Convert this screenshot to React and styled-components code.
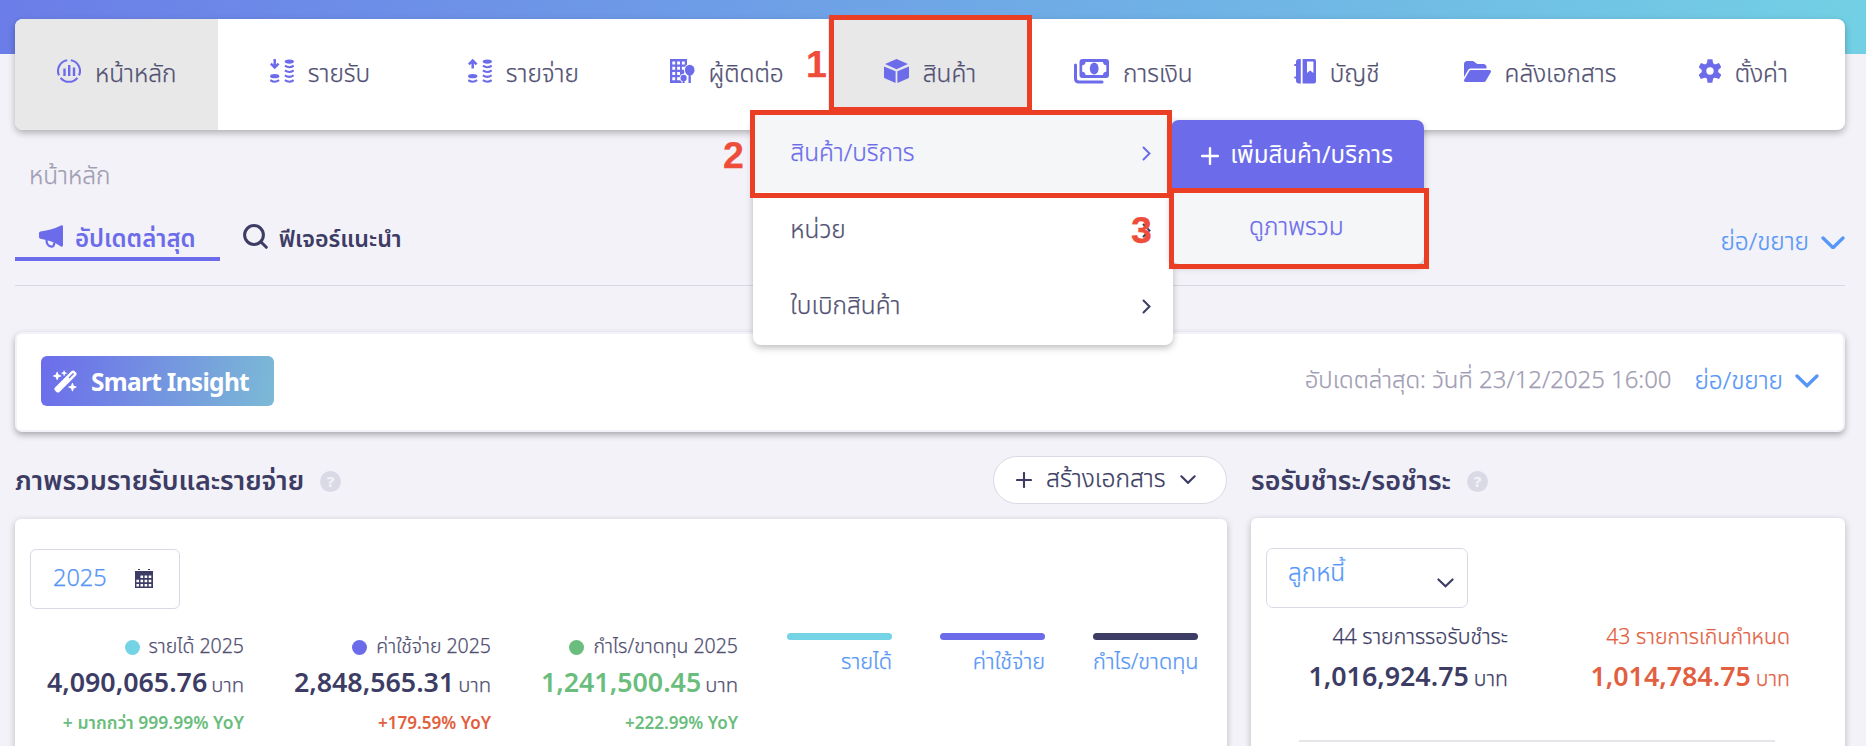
import React from 'react'
import styled, { createGlobalStyle } from 'styled-components'
import { FaFolderOpen, FaWandMagicSparkles } from 'react-icons/fa6'

const GlobalStyle = createGlobalStyle`
  * {
    box-sizing: border-box;
  }
  body {
    margin: 0;
    background: #f3f2f8;
    color: #515072;
    font-family: 'Noto Sans Thai', 'Noto Sans', sans-serif;
    font-weight: 300;
    font-size: 24.4px;
    -webkit-text-stroke: 0.25px;
  }
  svg {
    display: block;
    flex: none;
  }
`

const Page = styled.div`
  position: relative;
  height: 746px;
  overflow: hidden;
  padding: 19px 21px 0 15px;
  background: linear-gradient(90deg, #6b7de8, #72d0e4) top / 100% 54px no-repeat #f3f2f8;
  white-space: nowrap;
`

/* ---------- navbar ---------- */

const Navbar = styled.nav`
  display: grid;
  grid-template-columns: repeat(9, 1fr);
  height: 111px;
  background: #fff;
  border-radius: 8px;
  box-shadow: 0 3px 7px rgba(0, 0, 0, 0.28);
`
const NavItem = styled.div`
  position: relative;
  display: flex;
  align-items: center;
  justify-content: center;
  gap: 14px;
  background: ${p => (p.$active ? '#e8e8e8' : 'transparent')};
  border-radius: ${p => (p.$first ? '8px 0 0 8px' : '0')};
  color: #515072;
  & > svg {
    margin-bottom: 7px;
    color: #6c6ceb;
  }
`

/* ---------- dropdown ---------- */

const Menu = styled.div`
  position: absolute;
  z-index: 2;
  top: 96px;
  left: -75px;
  width: 420px;
  background: #fff;
  border-radius: 8px;
  box-shadow: 0 3px 7px rgba(0, 0, 0, 0.25);
`
const MenuRow = styled.div`
  display: flex;
  align-items: center;
  justify-content: space-between;
  height: 76.5px;
  padding: 0 22px 0 37px;
  color: ${p => (p.$active ? '#6c6ceb' : '#515072')};
  background: ${p => (p.$active ? '#f5f6f8' : 'transparent')};
  &:nth-child(2) {
    padding-top: 1px;
  }
  & > svg {
    color: ${p => (p.$active ? '#6c6ceb' : '#3c3c64')};
  }
`
const SubMenu = styled.div`
  position: absolute;
  z-index: 3;
  top: 5px;
  left: 418px;
  width: 253px;
  border-radius: 8px;
  overflow: hidden;
  background: #f5f6f8;
  box-shadow: 0 3px 7px rgba(0, 0, 0, 0.25);
`
const AddButton = styled.div`
  display: flex;
  align-items: center;
  gap: 11px;
  height: 71px;
  padding-left: 30px;
  background: #6c6ceb;
  color: #fff;
  font-weight: 400;
  font-size: 24.1px;
  -webkit-text-stroke: 0;
`
const SubRow = styled.div`
  height: 73px;
  padding-right: 3px;
  line-height: 73px;
  text-align: center;
  color: #6c6ceb;
`

/* ---------- breadcrumb and tabs ---------- */

const Breadcrumb = styled.div`
  height: 92px;
  padding: 29px 14px 0;
  line-height: 36px;
  color: #9f9db3;
`
const Tabs = styled.div`
  display: flex;
  height: 64px;
  border-bottom: 1px solid #d9d9e3;
`
const Tab = styled.div`
  display: flex;
  align-items: center;
  gap: 11px;
  height: 39px;
  padding: 0 24px;
  border-bottom: 4px solid ${p => (p.$active ? '#6c6ceb' : 'transparent')};
  color: ${p => (p.$active ? '#6c6ceb' : '#3c3c64')};
  font-size: ${p => (p.$active ? '24px' : '23.2px')};
  font-weight: 600;
  -webkit-text-stroke: 0;
  & + & {
    padding-left: 23px;
  }
  & > svg {
    margin-bottom: 6px;
  }
`
const Toggle = styled.div`
  display: flex;
  align-items: center;
  gap: 12px;
  height: ${p => p.$h || 39}px;
  color: #5596f7;
`
const Spacer = styled.div`
  flex: 1;
`

/* ---------- smart insight ---------- */

const InsightCard = styled.div`
  display: flex;
  align-items: center;
  gap: 24px;
  height: 100px;
  margin-top: 46px;
  padding: 0 24px 2px;
  background: #fff;
  border: 2px solid #f3f2f8;
  border-radius: 7px;
  box-shadow: 0 3px 6px rgba(0, 0, 0, 0.3);
`
const InsightBadge = styled.div`
  display: flex;
  align-items: center;
  gap: 13px;
  width: 233px;
  height: 50px;
  padding-left: 12px;
  border-radius: 6px;
  background: linear-gradient(100deg, #6c6ceb, #7bbad6);
  color: #fff;
  font-family: 'Noto Sans', sans-serif;
  font-size: 24.5px;
  font-weight: 700;
  letter-spacing: -0.7px;
  -webkit-text-stroke: 0;
`
const Updated = styled.div`
  margin-right: -1px;
  color: #9f9db3;
  font-size: 23.9px;
`

/* ---------- dashboard panels ---------- */

const Panels = styled.div`
  display: grid;
  grid-template-columns: 1212px 594px;
  gap: 24px;
`
const PanelHead = styled.div`
  display: flex;
  align-items: center;
  height: ${p => p.$h}px;
  padding-top: 12px;
`
const PanelTitle = styled.h2`
  margin: 0 16px 0 0;
  color: #3c3c64;
  font-size: 26.9px;
  font-weight: 600;
  -webkit-text-stroke: 0;
`
const Help = styled.div`
  width: 21px;
  height: 21px;
  border-radius: 50%;
  background: #dadae6;
  color: #f3f2f8;
  font: 700 15px/21px 'Noto Sans', sans-serif;
  text-align: center;
`
const CreateButton = styled.div`
  display: flex;
  align-items: center;
  gap: 14px;
  width: 234px;
  height: 48px;
  margin: 0 0 3px auto;
  padding: 0 0 1px 22px;
  border: 1px solid #d9d9e6;
  border-radius: 24px;
  background: #fff;
  color: #3c3c64;
  font-size: 24.6px;
`
const Card = styled.div`
  height: 260px;
  padding: 30px 15px;
  background: #fff;
  border-radius: 6px;
  box-shadow: 0 2px 7px rgba(0, 0, 0, 0.24);
`
const YearPicker = styled.div`
  display: flex;
  align-items: center;
  justify-content: space-between;
  width: 150px;
  height: 60px;
  padding: 0 26px 0 22px;
  border: 1px solid #d9d9e6;
  border-radius: 6px;
  color: #5596f7;
  font-size: 23.5px;
`
const Select = styled.div`
  display: flex;
  justify-content: space-between;
  width: 202px;
  height: 60px;
  padding: 10px 13px 0 21px;
  border: 1px solid #d9d9e6;
  border-radius: 7px;
  color: #5596f7;
  line-height: 30px;
  & > svg {
    margin-top: 19px;
    color: #3c3c64;
  }
`
const Summary = styled.div`
  display: flex;
  padding-top: ${p => p.$top}px;
`
const Metric = styled.div`
  width: ${p => p.$w}px;
  display: flex;
  flex-direction: column;
  align-items: flex-end;
  color: ${p => p.$color || '#515072'};
`
const MetricLabel = styled.div`
  display: flex;
  align-items: center;
  gap: 9px;
  font-size: ${p => (p.$big ? 21.3 : 19.5)}px;
  line-height: ${p => (p.$big ? 40 : 34)}px;
`
const Dot = styled.i`
  width: 15px;
  height: 15px;
  border-radius: 50%;
  background: ${p => p.$color};
`
const Amount = styled.div`
  display: flex;
  align-items: baseline;
  gap: ${p => (p.$big ? 5 : 4)}px;
  line-height: 40px;
  font-size: ${p => (p.$big ? 21.2 : 20.3)}px;
  b {
    color: ${p => p.$color};
    font-size: 26.8px;
    font-weight: 600;
    -webkit-text-stroke: 0;
  }
`
const Growth = styled.div`
  color: ${p => p.$color};
  font-size: ${p => (p.$long ? 17.5 : 17.1)}px;
  font-weight: 600;
  line-height: 36px;
  -webkit-text-stroke: 0;
`
const Legend = styled.div`
  display: flex;
  gap: 48px;
  margin-left: 49px;
  padding-top: 3px;
`
const LegendItem = styled.div`
  width: 105px;
  color: #5596f7;
  font-size: 21.7px;
  line-height: 34px;
  text-align: right;
  &::before {
    content: '';
    display: block;
    height: 7px;
    margin-bottom: 6px;
    border-radius: 4px;
    background: ${p => p.$color};
  }
`
const Divider = styled.div`
  height: 2px;
  margin: 40px 55px 0 33px;
  background: #e4e4e9;
`

/* ---------- tutorial callouts, drawn over the page ---------- */

const Frame = styled.div`
  position: absolute;
  z-index: 5;
  left: ${p => p.$x}px;
  top: ${p => p.$y}px;
  width: ${p => p.$w}px;
  height: ${p => p.$h}px;
  border: 5px solid #ea3f25;
`
const Step = styled.div`
  position: absolute;
  z-index: 6;
  left: ${p => p.$x}px;
  top: ${p => p.$y}px;
  color: #ee4d3a;
  font: 700 37.5px/36px 'Liberation Sans', sans-serif;
`

/* ---------- icons ---------- */

const HomeIcon = () => (
  <svg width="24" height="24" viewBox="0 0 24 24" fill="none" stroke="currentColor">
    <path d="M10.2 1.3A10.8 10.8 0 0 0 2 16.4M13.8 1.3A10.8 10.8 0 0 1 22 16.4M3.6 18.8a10.8 10.8 0 0 0 16.8 0" strokeWidth="2.1" />
    <path d="M7.5 9.4V17M12.2 6V17M17 8.6V17" strokeWidth="2.4" />
  </svg>
)
const CoinsIcon = ({ up }) => (
  <svg width="24" height="24" viewBox="0 0 24 24" fill="none" stroke="currentColor" strokeWidth="2.1">
    {up ? <path d="M4.7 9.5V2M.8 5.4l3.9-3.9 3.9 3.9" strokeWidth="2.5" /> : <path d="M4.7 0v7.5M.8 4.6l3.9 3.9 3.9-3.9" strokeWidth="2.5" />}
    <ellipse cx="4.7" cy="17.2" rx="4.6" ry="2.1" fill="currentColor" stroke="none" />
    <ellipse cx="19.3" cy="2.6" rx="4.6" ry="2.1" fill="currentColor" stroke="none" />
    <path d="M.3 21.2q4.4 3.2 8.8 0M14.9 6.6q4.4 3.2 8.8 0M14.9 11.4q4.4 3.2 8.8 0M14.9 16.3q4.4 3.2 8.8 0M14.9 21.2q4.4 3.2 8.8 0" />
  </svg>
)
const ContactIcon = () => (
  <svg width="25" height="24" viewBox="0 0 25 24" fill="currentColor">
    <path d="M0 0h17v8l-3 7-2 9H0z" />
    <path d="M2.3 2.600h2.900v3H2.300zM7.100 2.600H10v3H7.100zM11.900 2.600h2.900v3h-2.900zM2.300 7.800h2.900v3H2.300zM7.100 7.800H10v3H7.100zM11.900 7.800h2.900v3h-2.900zM2.300 13h2.900v3H2.300zM7.100 13H10v3H7.100zM2.300 18.300h2.900v3H2.300zM7.100 18.300H10v3H7.100z" fill="#fff" />
    <g stroke="#fff" strokeWidth="2" paintOrder="stroke">
      <path d="M12.700 20h1.800v4h-1.800zM18.700 14h1.900v10h-1.900z" />
      <ellipse cx="13.600" cy="19" rx="3.100" ry="3.300" />
      <ellipse cx="19.700" cy="11.200" rx="4.800" ry="5.500" />
    </g>
    <path d="M12.700 20h1.800v4h-1.800zM18.700 14h1.900v10h-1.900z" />
  </svg>
)
const CubeIcon = () => (
  <svg width="25" height="24" viewBox="0 0 25 24" fill="currentColor">
    <path d="M12.500 0 24 5 12.500 10.200 1 5zM0 7.400l11.600 4.900V24L.7 19.300Q0 19 0 18.200zM25 7.400l-11.600 4.900V24l10.900-4.700q.7-.3.7-1.100z" />
  </svg>
)
const MoneyIcon = () => (
  <svg width="35" height="25" viewBox="0 0 35 25" fill="currentColor">
    <path fillRule="evenodd" d="M8.500 0h23.500q3 0 3 3v13q0 3-3 3H8.500q-3 0-3-3V3q0-3 3-3zM11.500 3q0 3-3.300 3.300v6.400q3.300.300 3.300 3.300h17.500q0-3 3.300-3.300V6.300Q29 6 29 3z" />
    <ellipse cx="20.200" cy="9.500" rx="4.400" ry="6" />
    <path d="M1.500 6v13.500q0 3.500 3.500 3.500h23" fill="none" stroke="currentColor" strokeWidth="3" strokeLinecap="round" />
  </svg>
)
const BookIcon = () => (
  <svg width="22" height="25" viewBox="0 0 22 25" fill="currentColor">
    <path d="M6.800 0v24.500H5q-3 0-3-3V19.500H.3v-2H2V7H.3V5H2V3q0-3 3-3z" />
    <path fillRule="evenodd" d="M8.600 0H20q2 0 2 2v20.500q0 2-2 2H8.600zM13 2.500V14l3.200-2.600 3.200 2.600V2.500z" />
  </svg>
)
const GearIcon = () => (
  <svg width="22" height="24" viewBox="-11 -12 22 24" fill="currentColor">
    <circle r="8.300" />
    {[0, 60, 120].map(a => (
      <path key={a} d="M-2.400-11.800h4.800l.9 5V6.800l-.9 5h-4.800l-.9-5V-6.800z" transform={`rotate(${a})`} />
    ))}
    <circle r="3.700" fill="#fff" />
  </svg>
)
const MegaphoneIcon = () => (
  <svg width="25" height="23" viewBox="0 0 25 23" fill="currentColor">
    <path d="M1.500 6.600Q13 5 22 .5q2-.8 2 1.200v18.600q0 2-2 1.300Q13 15.500 1.500 13.800 0 13.500 0 12V8.200q0-1.400 1.500-1.600z" />
    <path d="M7.500 14.500q0 6.800 5 7.200 2.800 0 2.600-4" fill="none" stroke="currentColor" strokeWidth="2.200" />
  </svg>
)
const SearchIcon = () => (
  <svg width="25" height="25" viewBox="0 0 25 25" fill="none" stroke="currentColor" strokeWidth="3">
    <circle cx="11" cy="11" r="9.400" />
    <path d="m17.800 17.800 5.500 5.500" strokeLinecap="round" />
  </svg>
)
const CalendarIcon = () => (
  <svg width="18" height="20" viewBox="0 0 18 20" fill="#3c3c64">
    <path d="M3 0h2v1H3zM13 0h2v1h-2zM0 2h18v17H0z" />
    <path d="M5.500 6.500h2.600v2.600H5.500zM9.600 6.500h2.600v2.600H9.600zM13.700 6.500h2.600v2.600h-2.600zM1.400 10.700h2.600v2.600H1.400zM5.500 10.700h2.600v2.600H5.500zM9.600 10.700h2.600v2.600H9.600zM13.700 10.700h2.600v2.600h-2.600zM1.400 15h2.600v2.600H1.400zM5.500 15h2.600v2.600H5.500zM9.600 15h2.600v2.600H9.600zM13.700 15h2.600v2.600h-2.600z" fill="#fff" />
  </svg>
)
const PlusIcon = ({ size }) => (
  <svg width={size} height={size} viewBox="0 0 16 16" stroke="currentColor" strokeWidth="2.100" strokeLinecap="round">
    <path d="M8 1v14M1 8h14" />
  </svg>
)
const ChevronRight = () => (
  <svg width="9" height="15" viewBox="0 0 9 15" fill="none" stroke="currentColor" strokeWidth="2">
    <path d="m1.500 1.500 6 6-6 6" strokeLinecap="round" />
  </svg>
)
const ChevronDown = ({ w, thick }) => (
  <svg width={w} height={w * 0.57} viewBox="0 0 24 13.700" fill="none" stroke="currentColor" strokeWidth={thick}>
    <path d="M2 2l10 9.800L22 2" strokeLinecap="round" />
  </svg>
)

/* ---------- data ---------- */

const metrics = [
  { label: 'รายได้ 2025', dot: '#74d3e4', value: '4,090,065.76', color: '#3c3c64', growth: '+ มากกว่า 999.99% YoY', tone: '#6abd7d', w: 214 },
  { label: 'ค่าใช้จ่าย 2025', dot: '#6c6ceb', value: '2,848,565.31', color: '#3c3c64', growth: '+179.59% YoY', tone: '#e2603f', w: 247 },
  { label: 'กำไร/ขาดทุน 2025', dot: '#6abd7d', value: '1,241,500.45', color: '#6abd7d', growth: '+222.99% YoY', tone: '#6abd7d', w: 247 },
]

const legend = [
  ['รายได้', '#74d3e4'],
  ['ค่าใช้จ่าย', '#6c6ceb'],
  ['กำไร/ขาดทุน', '#3c3c64'],
]

const ProductMenu = () => (
  <Menu>
    <MenuRow $active>สินค้า/บริการ<ChevronRight /></MenuRow>
    <MenuRow>หน่วย<ChevronRight /></MenuRow>
    <MenuRow>ใบเบิกสินค้า<ChevronRight /></MenuRow>
    <SubMenu>
      <AddButton><PlusIcon size={18} />เพิ่มสินค้า/บริการ</AddButton>
      <SubRow>ดูภาพรวม</SubRow>
    </SubMenu>
  </Menu>
)

export default function App() {
  return (
    <Page>
      <GlobalStyle />
      <Navbar>
        <NavItem $active $first><HomeIcon />หน้าหลัก</NavItem>
        <NavItem><CoinsIcon />รายรับ</NavItem>
        <NavItem><CoinsIcon up />รายจ่าย</NavItem>
        <NavItem><ContactIcon />ผู้ติดต่อ</NavItem>
        <NavItem $active><CubeIcon />สินค้า<ProductMenu /></NavItem>
        <NavItem><MoneyIcon />การเงิน</NavItem>
        <NavItem><BookIcon />บัญชี</NavItem>
        <NavItem><FaFolderOpen size={27} />คลังเอกสาร</NavItem>
        <NavItem><GearIcon />ตั้งค่า</NavItem>
      </Navbar>

      <Breadcrumb>หน้าหลัก</Breadcrumb>
      <Tabs>
        <Tab $active><MegaphoneIcon />อัปเดตล่าสุด</Tab>
        <Tab><SearchIcon />ฟีเจอร์แนะนำ</Tab>
        <Spacer />
        <Toggle $h={41}>ย่อ/ขยาย<ChevronDown w={24} thick={3.3} /></Toggle>
      </Tabs>

      <InsightCard>
        <InsightBadge><FaWandMagicSparkles size={25} />Smart Insight</InsightBadge>
        <Spacer />
        <Updated>อัปเดตล่าสุด: วันที่ 23/12/2025 16:00</Updated>
        <Toggle>ย่อ/ขยาย<ChevronDown w={24} thick={3.3} /></Toggle>
      </InsightCard>

      <Panels>
        <div>
          <PanelHead $h={87}>
            <PanelTitle>ภาพรวมรายรับและรายจ่าย</PanelTitle>
            <Help>?</Help>
            <CreateButton><PlusIcon size={16} />สร้างเอกสาร<ChevronDown w={16} thick={3.2} /></CreateButton>
          </PanelHead>
          <Card>
            <YearPicker>2025<CalendarIcon /></YearPicker>
            <Summary $top={21}>
              {metrics.map((m, i) => (
                <Metric key={m.label} $w={m.w}>
                  <MetricLabel><Dot $color={m.dot} />{m.label}</MetricLabel>
                  <Amount $color={m.color}><b>{m.value}</b>บาท</Amount>
                  <Growth $color={m.tone} $long={i === 0}>{m.growth}</Growth>
                </Metric>
              ))}
              <Legend>
                {legend.map(([name, color]) => <LegendItem key={name} $color={color}>{name}</LegendItem>)}
              </Legend>
            </Summary>
          </Card>
        </div>
        <div>
          <PanelHead $h={86}>
            <PanelTitle>รอรับชำระ/รอชำระ</PanelTitle>
            <Help>?</Help>
          </PanelHead>
          <Card>
            <Select>ลูกหนี้<ChevronDown w={17} thick={3} /></Select>
            <Summary $top={10}>
              <Metric $w={242} $color="#3c3c64">
                <MetricLabel $big>44 รายการรอรับชำระ</MetricLabel>
                <Amount $big><b>1,016,924.75</b>บาท</Amount>
              </Metric>
              <Metric $w={282} $color="#e2603f">
                <MetricLabel $big>43 รายการเกินกำหนด</MetricLabel>
                <Amount $big><b>1,014,784.75</b>บาท</Amount>
              </Metric>
            </Summary>
            <Divider />
          </Card>
        </div>
      </Panels>

      <Frame $x={829} $y={15} $w={203} $h={97} />
      <Frame $x={750} $y={110} $w={422} $h={88} />
      <Frame $x={1169} $y={188} $w={260} $h={81} />
      <Step $x={806} $y={46}>1</Step>
      <Step $x={723} $y={137}>2</Step>
      <Step $x={1131} $y={212}>3</Step>
    </Page>
  )
}
